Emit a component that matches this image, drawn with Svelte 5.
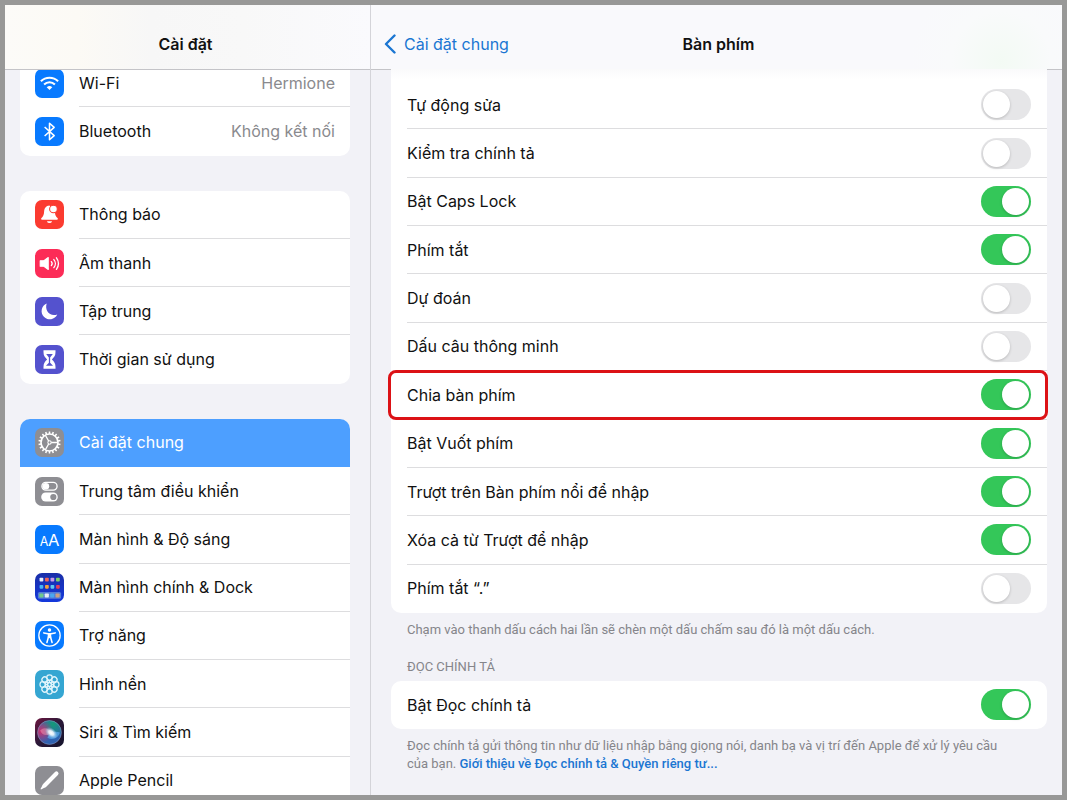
<script lang="ts">
  type Item = { icon: string; label: string; value?: string };
  type Option = { label: string; on: boolean; marked?: boolean };

  const groups: Item[][] = [
    [
      { icon: "wifi", label: "Wi-Fi", value: "Hermione" },
      { icon: "bluetooth", label: "Bluetooth", value: "Không kết nối" },
    ],
    [
      { icon: "bell", label: "Thông báo" },
      { icon: "sound", label: "Âm thanh" },
      { icon: "focus", label: "Tập trung" },
      { icon: "time", label: "Thời gian sử dụng" },
    ],
    [
      { icon: "general", label: "Cài đặt chung" },
      { icon: "control", label: "Trung tâm điều khiển" },
      { icon: "display", label: "Màn hình & Độ sáng" },
      { icon: "home", label: "Màn hình chính & Dock" },
      { icon: "access", label: "Trợ năng" },
      { icon: "wallpaper", label: "Hình nền" },
      { icon: "siri", label: "Siri & Tìm kiếm" },
      { icon: "pencil", label: "Apple Pencil" },
    ],
  ];

  let selected = $state("general");

  let options: Option[] = $state([
    { label: "Tự động sửa", on: false },
    { label: "Kiểm tra chính tả", on: false },
    { label: "Bật Caps Lock", on: true },
    { label: "Phím tắt", on: true },
    { label: "Dự đoán", on: false },
    { label: "Dấu câu thông minh", on: false },
    { label: "Chia bàn phím", on: true, marked: true },
    { label: "Bật Vuốt phím", on: true },
    { label: "Trượt trên Bàn phím nổi để nhập", on: true },
    { label: "Xóa cả từ Trượt để nhập", on: true },
    { label: "Phím tắt “.”", on: false },
  ]);
  let dictation = $state(true);

  const teeth = Array.from({ length: 18 }, (_, i) => i * 20);
  const petals = Array.from({ length: 8 }, (_, i) => i * 45);
  const apps = [
    ["#e8eef8", "#f0655c", "#c79be8", "#7ed06a"],
    ["#45b5f5", "#f5a13c", "#5cc8f0", "#e0405c"],
  ];
  const dock = ["#6fc98c", "#e6ecf6", "#4aa8f0", "#c9a184"];
</script>

{#snippet glyph(name: string)}
  <svg class="icon {name}" viewBox="0 0 28 28" aria-hidden="true">
    {#if name === "wifi"}
      <g fill="none" stroke="#fff" stroke-width="2">
        <path d="M5.700 11.800a11.800 11.800 0 0 1 16.600 0" />
        <path d="M8.800 15a7.400 7.400 0 0 1 10.400 0" />
      </g>
      <path d="M11.300 17.600a3.900 3.900 0 0 1 5.400 0L14 20.300z" fill="#fff" />
    {:else if name === "bluetooth"}
      <path d="M9.300 9.700l9.200 8.300-4.500 4V6l4.500 4-9.200 8.300" fill="none" stroke="#fff" stroke-width="1.500" stroke-linejoin="round" />
    {:else if name === "bell"}
      <path d="M14 5.200c-3.600.2-5 2.700-5.200 6-.2 3.400-.8 4.500-2.500 6.200-.8.800-.4 1.700.6 1.700h14.200c1 0 1.400-.9.6-1.700-1.500-1.500-2.200-2.600-2.400-5.200" fill="#fff" />
      <path d="M11.500 20.400h5a2.600 2.600 0 0 1-5 0z" fill="#fff" />
      <circle cx="17.800" cy="8.700" r="3.700" fill="#fff" stroke="#fb3b30" stroke-width="1" />
    {:else if name === "sound"}
      <path d="M5 11.400h3.300L12.800 8.200v11.600L8.300 16.600H5z" fill="#fff" stroke="#fff" stroke-linejoin="round" />
      <g fill="none" stroke="#fff" stroke-width="1.300" stroke-linecap="round">
        <path d="M15.800 12.200a3 3 0 0 1 0 3.800" />
        <path d="M18.200 10.200a6 6 0 0 1 0 7.800" />
        <path d="M20.700 8.500a9 9 0 0 1 0 11.200" />
      </g>
    {:else if name === "focus"}
      <path d="M11.300 6.300a7.900 7.900 0 1 0 10.200 10.500c-6.900 2.700-12.500-3.600-10.200-10.500z" fill="#fff" />
    {:else if name === "time"}
      <path d="M8.200 5h11.600v1.800c0 3.700-1.300 5-3.500 7.200 2.200 2.200 3.500 3.500 3.500 7.200V23H8.200v-1.800c0-3.700 1.300-5 3.500-7.200-2.200-2.200-3.500-3.500-3.500-7.200z" fill="#fff" />
      <path d="M10.800 8.800h6.400L14.600 12v5.200l2.800 2.900h-6.800l2.800-2.900V12z" fill="#5452ce" />
    {:else if name === "general"}
      <g stroke="#fff" fill="none">
        <circle cx="14" cy="14" r="8.200" stroke-width="1.600" />
        {#each teeth as angle}
          <path d="M14 3.300v2.500" stroke-width="1.500" transform="rotate({angle} 14 14)" />
        {/each}
        <path d="M14 14h8M14 14l-4-7M14 14l-4 7" stroke-width="1.300" />
        <circle cx="14" cy="14" r="1.600" fill="#8e8e93" stroke-width="1" />
      </g>
    {:else if name === "control"}
      <rect x="6.700" y="5.200" width="14.600" height="7.400" rx="3.700" fill="none" stroke="#fff" stroke-width="1.300" />
      <circle cx="10.500" cy="8.900" r="3.200" fill="#fff" />
      <rect x="6" y="15" width="16" height="8.600" rx="4.300" fill="#fff" />
      <circle cx="17.700" cy="19.300" r="3" fill="#8e8e93" />
    {:else if name === "display"}
      <text x="4.500" y="20" font-size="12">A</text>
      <text x="12.500" y="20" font-size="16">A</text>
    {:else if name === "home"}
      {#each apps as line, r}
        {#each line as color, c}
          <rect x={4.4 + c * 5.3} y={4.6 + r * 6.9} width="3.600" height="3.600" rx=".8" fill={color} />
        {/each}
      {/each}
      <rect x="2.800" y="18.300" width="22.400" height="6.600" rx="1.600" fill="#547cd8" />
      {#each dock as color, c}
        <rect x={4.2 + c * 5.2} y="19.700" width="4" height="4" rx=".8" fill={color} />
      {/each}
    {:else if name === "access"}
      <circle cx="14" cy="14" r="10.300" fill="none" stroke="#fff" stroke-width="1.300" />
      <circle cx="14" cy="8.700" r="1.700" fill="#fff" />
      <path d="M8.500 11.500l4 .9h3l4-.9M14 12.500v3.500" fill="none" stroke="#fff" stroke-width="1.500" stroke-linecap="round" />
      <path d="M12.400 12.200h3.200l.2 3.800H12.200z" fill="#fff" />
      <path d="M13 15.500l-1.500 5.300M15 15.500l1.500 5.300" stroke="#fff" stroke-width="1.500" stroke-linecap="round" />
    {:else if name === "wallpaper"}
      <g fill="none" stroke="#dff4fb" stroke-width="1.200">
        {#each petals as angle}
          <circle cx="14" cy="7.500" r="2.700" transform="rotate({angle} 14 14)" />
          <circle cx="14" cy="10.700" r="1.400" transform="rotate({angle + 22} 14 14)" />
        {/each}
        <circle cx="14" cy="14" r="1.800" />
      </g>
    {:else if name === "siri"}
      <defs>
        <radialGradient id="siri-pink" cx=".15" cy=".45" r=".5">
          <stop offset="0" stop-color="#d0306c" />
          <stop offset="1" stop-color="#d0306c" stop-opacity="0" />
        </radialGradient>
        <radialGradient id="siri-green" cx=".65" cy=".15" r=".6">
          <stop offset="0" stop-color="#159a78" />
          <stop offset="1" stop-color="#159a78" stop-opacity="0" />
        </radialGradient>
        <radialGradient id="siri-core">
          <stop offset="0" stop-color="#fff" />
          <stop offset=".4" stop-color="#eef6fc" stop-opacity=".9" />
          <stop offset="1" stop-color="#8fc6ee" stop-opacity="0" />
        </radialGradient>
      </defs>
      <circle cx="14" cy="14" r="11.500" fill="#2f62b0" />
      <circle cx="14" cy="14" r="11.500" fill="url(#siri-green)" />
      <circle cx="14" cy="14" r="11.500" fill="url(#siri-pink)" stroke="#a3a9c8" stroke-opacity=".7" stroke-width=".6" />
      <path d="M5 12c4-4 8-2 11 2-4 4-9 3-11-2z" fill="#e08cae" opacity=".6" />
      <path d="M12 19c2-5 7-7 12-5-1 5-7 8-12 5z" fill="#5cabf0" opacity=".7" />
      <ellipse cx="16" cy="14.500" rx="7" ry="4.500" fill="url(#siri-core)" transform="rotate(40 16 14)" />
    {:else}
      <path d="M9.500 18.500L20.700 7.300" stroke="#fff" stroke-width="4" stroke-linecap="round" />
      <path d="M7.700 17.500l2.800 2.800-4.700 2.400-.5-.5z" fill="#fff" />
    {/if}
  </svg>
{/snippet}

<div class="settings">
  <aside class="sidebar">
    <header class="bar">
      <h1>Cài đặt</h1>
    </header>
    <nav class="menu">
      {#each groups as items}
        <ul class="card" style:flex-grow={items.length}>
          {#each items as item}
            <li>
              <a
                class="item"
                class:selected={item.icon === selected}
                href="#{item.icon}"
                onclick={() => (selected = item.icon)}
              >
                {@render glyph(item.icon)}
                <span class="line">
                  <span>{item.label}</span>
                  {#if item.value}<span class="value">{item.value}</span>{/if}
                </span>
              </a>
            </li>
          {/each}
        </ul>
      {/each}
    </nav>
  </aside>

  <main class="detail">
    <header class="bar">
      <a class="back" href="#general">
        <svg viewBox="0 0 12 20" aria-hidden="true">
          <path d="M10.500 1.500L2 10l8.500 8.500" fill="none" stroke="currentColor" stroke-width="2.400" stroke-linecap="round" stroke-linejoin="round" />
        </svg>
        Cài đặt chung
      </a>
      <h2>Bàn phím</h2>
    </header>

    <div class="content">
      <div class="card options">
        {#each options as option}
          <label class="option" class:marked={option.marked}>
            <span class="line">
              {option.label}
              <input type="checkbox" role="switch" bind:checked={option.on} />
            </span>
          </label>
        {/each}
      </div>
      <p class="note">Chạm vào thanh dấu cách hai lần sẽ chèn một dấu chấm sau đó là một dấu cách.</p>

      <h3>ĐỌC CHÍNH TẢ</h3>
      <div class="card">
        <label class="option">
          <span class="line">
            Bật Đọc chính tả
            <input type="checkbox" role="switch" bind:checked={dictation} />
          </span>
        </label>
      </div>
      <p class="note">
        Đọc chính tả gửi thông tin như dữ liệu nhập bằng giọng nói, danh bạ và vị trí đến Apple để xử lý yêu cầu
        <span class="keep">của bạn.</span>
        <a href="#privacy">Giới thiệu về Đọc chính tả & Quyền riêng tư...</a>
      </p>
    </div>
  </main>
</div>

<style>
  .settings {
    box-sizing: border-box;
    display: grid;
    grid-template-columns: 366px 1fr;
    height: 100vh;
    border: 5px solid #989897;
    background: #f2f2f7;
    color: #111;
    font: 16px/20px Inter, "Noto Sans", sans-serif;
    overflow: hidden;
  }

  .settings *,
  .settings *::before {
    box-sizing: border-box;
  }

  h1,
  h2,
  h3,
  p,
  ul {
    margin: 0;
    padding: 0;
  }

  a {
    color: #1b76d2;
    text-decoration: none;
  }

  .sidebar,
  .detail {
    display: flex;
    flex-direction: column;
    min-height: 0;
    overflow: hidden;
  }

  .sidebar {
    border-right: 1px solid #d4d4d9;
  }

  .bar {
    flex: none;
    height: 65px;
    padding-top: 14px;
    border-bottom: 1px solid #c4c4c8;
    display: grid;
    align-items: center;
    justify-items: center;
    z-index: 1;
  }

  .sidebar .bar {
    padding-right: 4px;
    background: linear-gradient(90deg, #fcfbf8, #fcfaf5 20%, #f7f7f7 40%, #f8f8f8 65%, #fafafd);
  }

  .detail .bar {
    grid-template-columns: 1fr auto 1fr;
    padding-left: 13px;
    padding-right: 9px;
    background: radial-gradient(circle at 630px 56px, #f3faf4, #f9fafb 50px, #f9f9fc 90px);
    z-index: 0;
  }

  h1,
  h2 {
    font-size: 16px;
    font-weight: 600;
  }

  .back {
    display: flex;
    align-items: center;
    gap: 8px;
    justify-self: start;
  }

  .back svg {
    width: 12px;
    height: 20px;
  }

  /* the list is scrolled a little under the bar and past the bottom edge */
  .menu {
    flex: 1;
    display: flex;
    flex-direction: column;
    gap: 35px;
    margin: -11px 0 -10px;
    padding: 0 20px 0 15px;
  }

  .card {
    border-radius: 10px;
    background: #fff;
    list-style: none;
  }

  .menu .card {
    flex-basis: 0;
    display: flex;
    flex-direction: column;
  }

  li {
    flex: 1;
    display: flex;
    min-height: 48px;
  }

  .item {
    flex: 1;
    display: flex;
    align-items: center;
    gap: 15px;
    padding-left: 15px;
    color: inherit;
  }

  .item.selected {
    border-radius: 10px 10px 0 0;
    background: #4d9fff;
    color: #fff;
  }

  .line {
    flex: 1;
    align-self: stretch;
    display: flex;
    align-items: center;
    justify-content: space-between;
    padding-right: 15px;
    border-bottom: 1px solid #dddddf;
  }

  li:last-child .line,
  .option:last-child .line,
  .selected .line {
    border-color: transparent;
  }

  .value {
    color: #8a8a8e;
  }

  .icon {
    flex: none;
    width: 29px;
    height: 29px;
    border-radius: 7px;
    background: #8e8e93;
  }

  .icon text {
    fill: #fff;
    font-family: Inter, sans-serif;
  }

  .icon.wifi,
  .icon.bluetooth,
  .icon.display,
  .icon.access {
    background: #087aff;
  }

  .icon.bell {
    background: #fb3b30;
  }

  .icon.sound {
    background: #fc2c57;
  }

  .icon.focus,
  .icon.time {
    background: #5452ce;
  }

  .icon.home {
    background: linear-gradient(#1a2fa8, #1438dc);
  }

  .icon.wallpaper {
    background: #35a6d2;
  }

  .icon.siri {
    background: linear-gradient(135deg, #6c1640, #2a1838 50%, #14142c);
  }

  .content {
    flex: 1;
    display: flex;
    flex-direction: column;
    margin-top: -1px;
    padding: 0 15px 22px 20px;
    z-index: 1;
  }

  .options {
    flex: 1;
    display: flex;
    flex-direction: column;
    padding-top: 12px;
    border-radius: 0 0 10px 10px;
    background: linear-gradient(#fafafb, #fff 10px);
  }

  .option {
    position: relative;
    flex: 1;
    display: flex;
    min-height: 48px;
    padding-left: 16px;
  }

  .option .line {
    padding-right: 16px;
  }

  .marked::after {
    content: "";
    position: absolute;
    inset: -1px -1px 0 -3px;
    border: 3px solid #dc1216;
    border-radius: 8px;
    pointer-events: none;
  }

  input {
    appearance: none;
    width: 50px;
    height: 31px;
    margin: 0;
    padding: 2px;
    border-radius: 16px;
    background: #e6e6e8;
  }

  input::before {
    content: "";
    display: block;
    width: 27px;
    height: 27px;
    border-radius: 50%;
    background: #fff;
    box-shadow: 0 1px 3px #0003;
  }

  input:checked {
    background: #34c759;
  }

  input:checked::before {
    margin-left: auto;
  }

  .note,
  h3 {
    padding: 0 16px;
    color: #85858a;
    font-family: Roboto, "Noto Sans", sans-serif;
    font-size: 13px;
    font-weight: 400;
    line-height: 18px;
  }

  .note {
    padding-top: 8px;
  }

  .note a {
    font-weight: 500;
  }

  .keep {
    white-space: nowrap;
  }

  h3 {
    padding-top: 19px;
    padding-bottom: 5px;
  }
</style>
